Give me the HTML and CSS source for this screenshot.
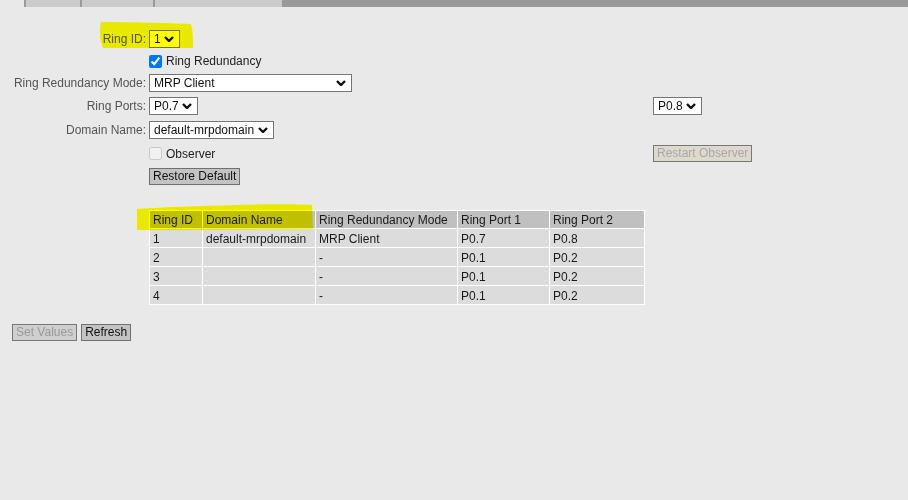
FILE: index.html
```html
<!DOCTYPE html>
<html>
<head>
<meta charset="utf-8">
<link rel="stylesheet" href="styles.css">
</head>
<body>
<div class="tabbar">
  <div class="tab t1"></div>
  <div class="tab t2"></div>
  <div class="tab t3"></div>
  <div class="tabfill"></div>
</div>

<form class="cfg">
  <div class="lbl">Ring ID:</div>
  <div class="ctl"><span class="sel w-id"><span class="val">1</span><svg class="chev" viewBox="0 0 10 6" width="10" height="6"><path d="M1 1 L5 5 L9 1" fill="none" stroke="#111" stroke-width="2.4"/></svg></span></div>
  <div class="ext"></div>

  <div class="lbl"></div>
  <div class="ctl"><label class="chk"><input type="checkbox" checked> Ring Redundancy</label></div>
  <div class="ext"></div>

  <div class="lbl">Ring Redundancy Mode:</div>
  <div class="ctl"><span class="sel w-mode"><span class="val">MRP Client</span><svg class="chev" viewBox="0 0 10 6" width="10" height="6"><path d="M1 1 L5 5 L9 1" fill="none" stroke="#111" stroke-width="2.4"/></svg></span></div>
  <div class="ext"></div>

  <div class="lbl">Ring Ports:</div>
  <div class="ctl"><span class="sel w-port"><span class="val">P0.7</span><svg class="chev" viewBox="0 0 10 6" width="10" height="6"><path d="M1 1 L5 5 L9 1" fill="none" stroke="#111" stroke-width="2.4"/></svg></span></div>
  <div class="ext"><span class="sel w-port"><span class="val">P0.8</span><svg class="chev" viewBox="0 0 10 6" width="10" height="6"><path d="M1 1 L5 5 L9 1" fill="none" stroke="#111" stroke-width="2.4"/></svg></span></div>

  <div class="lbl">Domain Name:</div>
  <div class="ctl"><span class="sel w-dom"><span class="val">default-mrpdomain</span><svg class="chev" viewBox="0 0 10 6" width="10" height="6"><path d="M1 1 L5 5 L9 1" fill="none" stroke="#111" stroke-width="2.4"/></svg></span></div>
  <div class="ext"></div>

  <div class="lbl"></div>
  <div class="ctl"><label class="chk"><input type="checkbox" disabled> Observer</label></div>
  <div class="ext"><button type="button" class="btn btn-obs" disabled>Restart Observer</button></div>

  <div class="lbl"></div>
  <div class="ctl"><button type="button" class="btn">Restore Default</button></div>
  <div class="ext"></div>
</form>

<table class="rings">
  <colgroup>
    <col class="c1"><col class="c2"><col class="c3"><col class="c4"><col class="c5">
  </colgroup>
  <thead>
    <tr><th>Ring ID</th><th>Domain Name</th><th>Ring Redundancy Mode</th><th>Ring Port 1</th><th>Ring Port 2</th></tr>
  </thead>
  <tbody>
    <tr><td>1</td><td>default-mrpdomain</td><td>MRP Client</td><td>P0.7</td><td>P0.8</td></tr>
    <tr><td>2</td><td></td><td>-</td><td>P0.1</td><td>P0.2</td></tr>
    <tr><td>3</td><td></td><td>-</td><td>P0.1</td><td>P0.2</td></tr>
    <tr><td>4</td><td></td><td>-</td><td>P0.1</td><td>P0.2</td></tr>
  </tbody>
</table>

<div class="actions">
  <button type="button" class="btn btn-off" disabled>Set Values</button>
  <button type="button" class="btn">Refresh</button>
</div>

<svg class="hl hl-id" width="100" height="30" viewBox="0 0 100 30">
  <path d="M4 1 C30 1 70 2 94 3 C96 10 96 20 96 27 L6 27 C3 20 2 10 4 1 Z" fill="#ffff00"/>
</svg>
<svg class="hl hl-th" width="180" height="28" viewBox="0 0 180 28">
  <path d="M0 5 C30 3 60 2 100 1 C130 0 160 0 175 1 L176 25 L0 26 Z" fill="#ffff00"/>
</svg>
</body>
</html>
```

FILE: styles.css
```css
html, body {
  margin: 0;
  padding: 0;
}
body {
  background: #e9e9e9;
  font-family: "Liberation Sans", Arial, sans-serif;
  font-size: 12px;
  color: #222;
  position: relative;
  width: 908px;
  height: 500px;
  overflow: hidden;
}

.tabbar {
  display: flex;
  height: 7px;
  margin-left: 24px;
}
.tab {
  background: #cbcbcb;
  border-left: 2px solid #999;
}
.t1 { width: 54px; }
.t2 { width: 71px; }
.t3 { width: 127px; }
.tabfill {
  flex: 1;
  background: #999;
}

.cfg {
  display: grid;
  grid-template-columns: 149px 504px auto;
  grid-template-rows: 22px 22px 22px 24px 24px 23px 22px;
  margin: 21px 0 0 0;
}
.lbl, .ctl, .ext {
  display: flex;
  align-items: center;
}
.lbl {
  justify-content: flex-end;
  padding-right: 3px;
  color: #555;
  white-space: nowrap;
}

.sel {
  position: relative;
  display: inline-flex;
  align-items: center;
  box-sizing: border-box;
  height: 18px;
  background: #fff;
  border: 1px solid #767676;
  color: #111;
  padding-left: 4px;
}
.sel .val {
  line-height: 16px;
}
.sel .chev {
  position: absolute;
  right: 5px;
  top: 5px;
}
.w-id { width: 31px; }
.w-mode { width: 203px; }
.w-port { width: 49px; }
.w-dom { width: 125px; }

.chk {
  display: inline-flex;
  align-items: center;
  color: #222;
}
.chk input {
  margin: 0 4px 0 0;
  width: 13px;
  height: 13px;
  accent-color: #0075ff;
}

.btn {
  font-family: "Liberation Sans", Arial, sans-serif;
  font-size: 12px;
  height: 17px;
  line-height: 13px;
  padding: 0 3px;
  margin: 0;
  background: #c3c3c3;
  color: #111;
  border: 1px solid #707070;
  border-radius: 0;
}
.btn-obs {
  background: #ddd9cc;
  color: #a8a8a8;
  border-color: #777;
}
.btn-off {
  background: #cfcfcf;
  color: #9a9a9a;
  border-color: #777;
}

.rings {
  border-collapse: collapse;
  margin: 23px 0 0 149px;
  table-layout: fixed;
  width: 495px;
}
.c1 { width: 53px; }
.c2 { width: 113px; }
.c3 { width: 142px; }
.c4 { width: 92px; }
.c5 { width: 95px; }
.rings th, .rings td {
  border: 1px solid #fff;
  height: 19px;
  box-sizing: border-box;
  padding: 1px 2px 0 3px;
  text-align: left;
  font-weight: normal;
  white-space: nowrap;
  color: #1a1a1a;
}
.rings th {
  height: 18px;
  padding-top: 0;
  background: #c0c0c0;
}
.rings td {
  background: #dcdcdc;
}

.actions {
  margin: 19px 0 0 12px;
  display: flex;
  gap: 4px;
}

.hl {
  position: absolute;
  mix-blend-mode: multiply;
  pointer-events: none;
}
.hl-id {
  left: 97px;
  top: 21px;
}
.hl-th {
  left: 137px;
  top: 204px;
}
```
